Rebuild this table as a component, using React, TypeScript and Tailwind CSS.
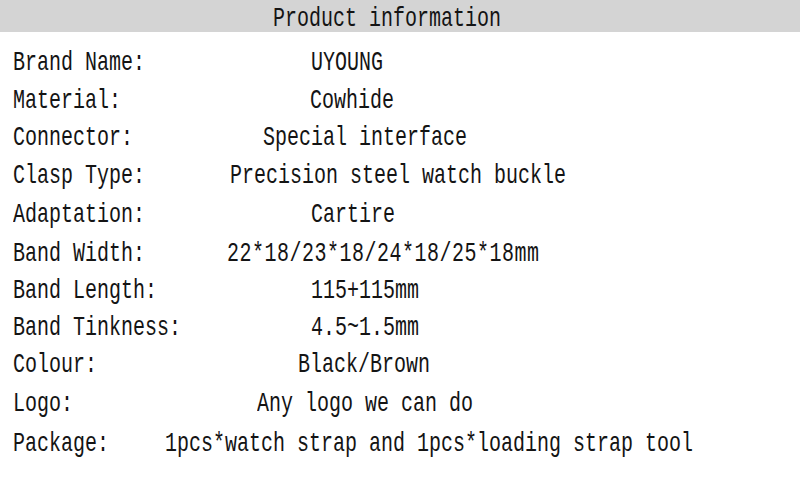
import React from "react";

const rows: { label: string; value: string; x: number; h: number; wide?: boolean }[] = [
  { label: "Brand Name:", value: "UYOUNG", x: 313, h: 38 },
  { label: "Material:", value: "Cowhide", x: 312, h: 37 },
  { label: "Connector:", value: "Special interface", x: 265, h: 38 },
  { label: "Clasp Type:", value: "Precision steel watch buckle", x: 232, h: 39 },
  { label: "Adaptation:", value: "Cartire", x: 313, h: 39 },
  { label: "Band Width:", value: "22*18/23*18/24*18/25*18mm", x: 229, h: 37, wide: true },
  { label: "Band Length:", value: "115+115mm", x: 313, h: 37 },
  { label: "Band Tinkness:", value: "4.5~1.5mm", x: 313, h: 37 },
  { label: "Colour:", value: "Black/Brown", x: 300, h: 39 },
  { label: "Logo:", value: "Any logo we can do", x: 259, h: 40 },
  { label: "Package:", value: "1pcs*watch strap and 1pcs*loading strap tool", x: 167, h: 40 },
];

function T({ children, wide }: { children: React.ReactNode; wide?: boolean }) {
  return (
    <span
      className={
        wide
          ? "inline-block whitespace-nowrap origin-left scale-x-[0.714] tracking-[0.7px]"
          : "inline-block whitespace-nowrap origin-left scale-x-[0.714]"
      }
    >
      {children}
    </span>
  );
}

export default function App() {
  return (
    <div
      className="w-[800px] h-[480px] overflow-hidden bg-white text-[#141414] text-[28px]"
      style={{ fontFamily: '"Liberation Mono", "DejaVu Sans Mono", monospace' }}
    >
      <div className="h-[32px] bg-[#d4d4d4] leading-[37px] pl-[273px] whitespace-nowrap">
        <T>Product information</T>
      </div>
      <div className="pt-[12px] pl-[13px]">
        {rows.map((r) => (
          <div key={r.label} className="flex whitespace-nowrap leading-[38px]" style={{ height: r.h }}>
            <div className="shrink-0" style={{ width: r.x - 15 }}>
              <T>{r.label}</T>
            </div>
            <div className="shrink-0">
              <T wide={r.wide}>{r.value}</T>
            </div>
          </div>
        ))}
      </div>
    </div>
  );
}
